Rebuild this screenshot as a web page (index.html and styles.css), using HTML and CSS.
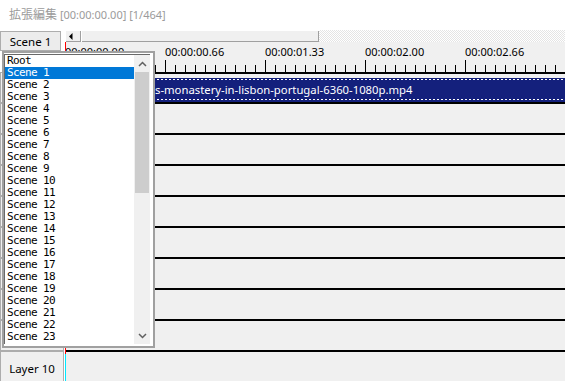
FILE: index.html
```html
<!DOCTYPE html>
<html>
	<head>
		<meta charset="utf-8">
		<title>拡張編集</title>
		<link rel="stylesheet" href="styles.css">
	</head>
	<body>
		<div class="title"><span class="title-jp">拡張編集</span> [00:00:00.00] [1/464]</div>
		<div class="main">
			<div class="side">
				<div class="scene-btn">Scene 1</div>
				<!-- layers 1-9 sit under the open list -->
				<div class="layers">
					<div class="layer-btn"></div>
					<div class="layer-btn"></div>
					<div class="layer-btn"></div>
					<div class="layer-btn"></div>
					<div class="layer-btn"></div>
					<div class="layer-btn"></div>
					<div class="layer-btn"></div>
					<div class="layer-btn"></div>
					<div class="layer-btn"></div>
					<div class="layer-btn">Layer 10</div>
				</div>
			</div>
			<div class="content">
				<div class="hscroll">
					<div class="hscroll-arrow">
						<svg width="4" height="7" viewBox="0 0 4 7"><polygon points="3.5,0 0,3.5 3.5,7" fill="#000"/></svg>
					</div>
					<div class="hscroll-thumb"></div>
					<div class="hscroll-track"></div>
				</div>
				<div class="timeline">
					<div class="ruler">
						<div class="seg">00:00:00.00</div>
						<div class="seg">00:00:00.66</div>
						<div class="seg">00:00:01.33</div>
						<div class="seg">00:00:02.00</div>
						<div class="seg">00:00:02.66</div>
					</div>
					<div class="rows">
						<div class="row"><div class="clip">s-monastery-in-lisbon-portugal-6360-1080p.mp4</div></div>
						<div class="row"></div>
						<div class="row"></div>
						<div class="row"></div>
						<div class="row"></div>
						<div class="row"></div>
						<div class="row"></div>
						<div class="row"></div>
						<div class="row"></div>
						<div class="row last"></div>
					</div>
					<div class="cursor"></div>
				</div>
			</div>
		</div>

		<!-- scene select list (open) -->
		<div class="dropdown">
			<div class="listbox">
				<div class="items">
					<div class="item">Root</div>
					<div class="item sel">Scene 1</div>
					<div class="item">Scene 2</div>
					<div class="item">Scene 3</div>
					<div class="item">Scene 4</div>
					<div class="item">Scene 5</div>
					<div class="item">Scene 6</div>
					<div class="item">Scene 7</div>
					<div class="item">Scene 8</div>
					<div class="item">Scene 9</div>
					<div class="item">Scene 10</div>
					<div class="item">Scene 11</div>
					<div class="item">Scene 12</div>
					<div class="item">Scene 13</div>
					<div class="item">Scene 14</div>
					<div class="item">Scene 15</div>
					<div class="item">Scene 16</div>
					<div class="item">Scene 17</div>
					<div class="item">Scene 18</div>
					<div class="item">Scene 19</div>
					<div class="item">Scene 20</div>
					<div class="item">Scene 21</div>
					<div class="item">Scene 22</div>
					<div class="item">Scene 23</div>
				</div>
				<div class="vscroll">
					<div class="vscroll-btn">
						<svg width="9" height="6" viewBox="0 0 9 6"><polyline points="1,5 4.5,1.5 8,5" fill="none" stroke="#606060" stroke-width="1.5"/></svg>
					</div>
					<div class="vscroll-thumb"></div>
					<div class="vscroll-track"></div>
					<div class="vscroll-btn">
						<svg width="9" height="6" viewBox="0 0 9 6"><polyline points="1,1 4.5,4.5 8,1" fill="none" stroke="#606060" stroke-width="1.5"/></svg>
					</div>
				</div>
			</div>
		</div>
	</body>
</html>
```

FILE: styles.css
```css
*{
	margin: 0;
	padding: 0;
}
body{
	font-family: "Noto Sans", "Noto Sans CJK JP", sans-serif;
	font-size: 11px;
	color: #000;
	background-color: #fff;
	height: 381px;
	overflow: hidden;
}
.title{
	height: 30px;
	box-sizing: border-box;
	padding: 6px 0 0 9px;
	line-height: 17px;
	color: #9b9b9b;
}
.title-jp{
	font-size: 12px;
}
.main{
	display: flex;
	height: 351px;
	overflow: hidden;
}
.side{
	width: 65px;
	flex: none;
}
.scene-btn{
	width: 61px;
	height: 20px;
	margin-top: 1px;
	box-sizing: border-box;
	border: 1px solid #adadad;
	background-color: #ececec;
	font-size: 11.5px;
	display: flex;
	align-items: center;
	justify-content: center;
}
.layers{
	margin-top: 21px;
}
.layer-btn{
	width: 64px;
	height: 31px;
	box-sizing: border-box;
	padding-top: 3px;
	border: 1px solid #adadad;
	background-color: #f0f0f0;
	font-size: 11.5px;
	display: flex;
	align-items: center;
	justify-content: center;
}
.content{
	flex: 1;
	min-width: 0;
	display: flex;
	flex-direction: column;
}
.hscroll{
	height: 12px;
	flex: none;
	display: flex;
}
.hscroll-arrow{
	width: 16px;
	box-sizing: border-box;
	background-color: #f0f0f0;
	box-shadow: inset 1px 1px #fff, inset -1px -1px #a0a0a0;
	display: flex;
	align-items: center;
	padding-left: 4px;
}
.hscroll-thumb{
	width: 238px;
	background-color: #f0f0f0;
	box-shadow: inset 1px 1px #fff, inset -1px -1px #a0a0a0;
}
.hscroll-track{
	flex: 1;
	background: repeating-conic-gradient(#e4e4e4 0 25%, #fff 0 50%) 0 0 / 2px 2px;
}
.timeline{
	flex: 1;
	position: relative;
	background-color: #f0f0f0;
}
.ruler{
	display: flex;
	height: 32px;
	box-sizing: border-box;
	border-bottom: 2px solid #000;
}
.seg{
	width: 100px;
	flex: none;
	padding-top: 2px;
	line-height: 15px;
	background:
		linear-gradient(#000, #000) 0 18px / 1px 12px no-repeat,
		repeating-linear-gradient(to right, #000 0 1px, transparent 1px 10px) 0 23px / 100% 7px no-repeat;
}
.row{
	height: 31px;
	box-sizing: border-box;
	border-bottom: 2px solid #000;
}
.row:first-child{
	height: 30px;
	padding-top: 4px;
}
.row.last{
	border-bottom: 0;
	border-left: 1px solid #00e8ff;
}
.clip{
	height: 24px;
	padding-left: 90px;
	line-height: 24px;
	font-size: 11.3px;
	color: #fff;
	white-space: nowrap;
	overflow: hidden;
	background:
		repeating-linear-gradient(to right, #fff 0 2px, transparent 2px 4px) 0 1px / 100% 1px no-repeat,
		repeating-linear-gradient(to right, #fff 0 2px, transparent 2px 4px) 0 21px / 100% 1px no-repeat,
		#14207c;
}
.cursor{
	position: absolute;
	left: 0;
	top: 0;
	bottom: 29px;
	width: 1px;
	background-color: #f00;
}
.dropdown{
	position: absolute;
	left: 2px;
	top: 51px;
	width: 153px;
	height: 297px;
	box-sizing: border-box;
	padding: 1px 3px 2px 0;
	border: 2px solid #a0a0a0;
	background-color: #fff;
}
.listbox{
	display: flex;
	height: 290px;
	box-sizing: border-box;
	border-top: 1px solid #696969;
	border-left: 1px solid #696969;
}
.items{
	flex: 1;
	overflow: hidden;
	font-family: "DejaVu Sans Mono", monospace;
	font-size: 11px;
	letter-spacing: -0.62px;
}
.item{
	height: 12px;
	line-height: 12px;
	padding-left: 2px;
	white-space: pre;
}
.item.sel{
	background-color: #0078d7;
	color: #fff;
}
.vscroll{
	width: 16px;
	flex: none;
	display: flex;
	flex-direction: column;
	background-color: #f0f0f0;
}
.vscroll-btn{
	height: 17px;
	flex: none;
	display: flex;
	align-items: center;
	justify-content: center;
}
.vscroll-thumb{
	height: 121px;
	flex: none;
	margin: 0 1px;
	background-color: #cdcdcd;
}
.vscroll-track{
	flex: 1;
}
```
